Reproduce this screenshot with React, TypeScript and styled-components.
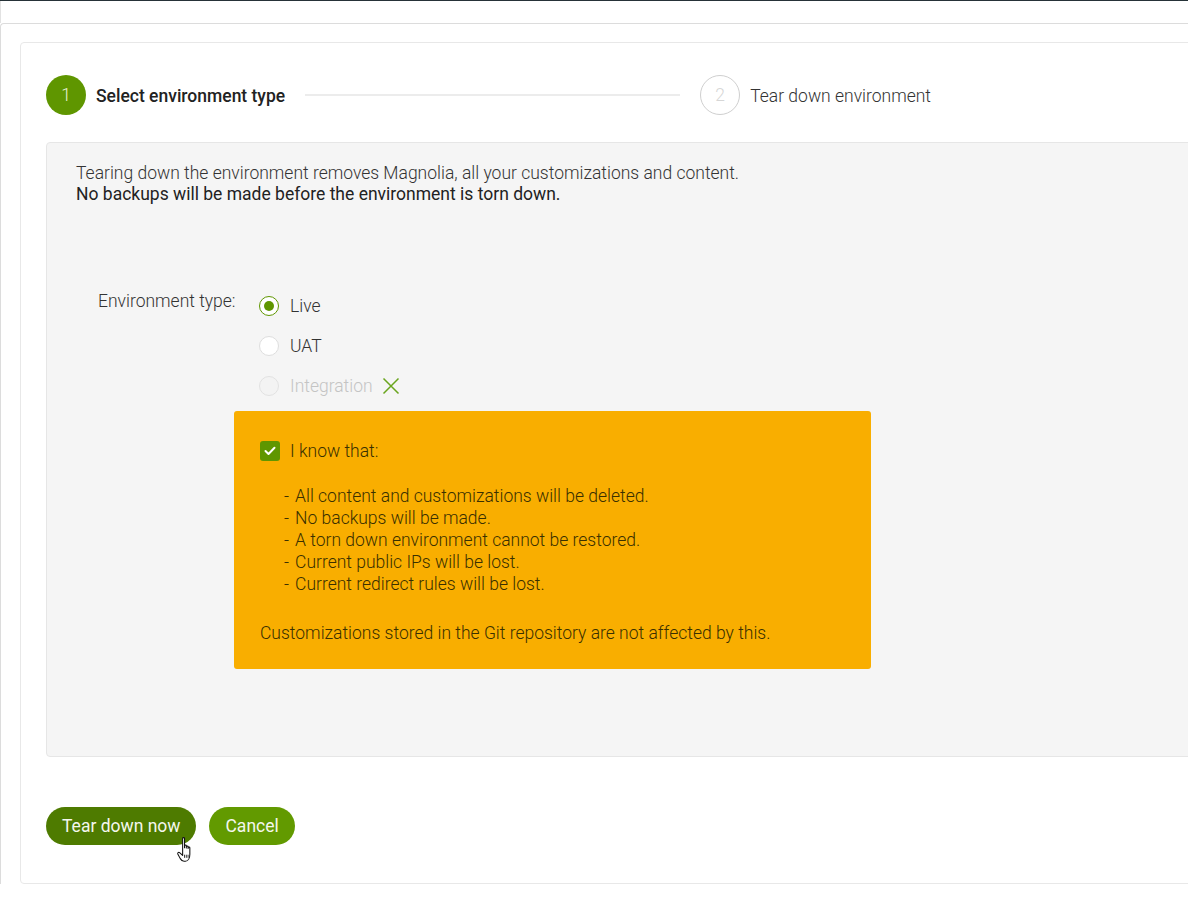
import React from 'react';
import styled, { createGlobalStyle } from 'styled-components';

const Global = createGlobalStyle`
  html, body { margin: 0; padding: 0; background: #fff; overflow: hidden; }
  body { font-family: Roboto, "Liberation Sans", Arial, sans-serif; color: #333; }
  * { box-sizing: border-box; }
`;

const Page = styled.div`
  border-top: 1px solid #263238;
  min-height: 900px;
`;

const TopStrip = styled.div`
  height: 22px;
  border-left: 1px solid #e2e2e2;
`;

const Outer = styled.div`
  border-top: 1px solid #dcdcdc;
  border-left: 1px solid #dcdcdc;
  border-top-left-radius: 4px;
  padding: 18px 0 0 19px;
  overflow: hidden;
`;

const Card = styled.div`
  width: 1250px;
  border: 1px solid #e8e8e8;
  border-radius: 4px;
  padding: 32px 25px 38px 25px;
`;

const Stepper = styled.div`
  display: flex;
  align-items: center;
  height: 40px;
`;

const Step = styled.div`
  display: flex;
  align-items: center;
  gap: 10px;
`;

const StepCircle = styled.div<{ $active?: boolean }>`
  width: 40px;
  height: 40px;
  border-radius: 50%;
  display: flex;
  align-items: center;
  justify-content: center;
  font-size: 17.5px;
  font-weight: 300;
  background: ${p => (p.$active ? '#5f9600' : '#fff')};
  color: ${p => (p.$active ? '#e6f0d6' : '#d6d6d6')};
  border: ${p => (p.$active ? 'none' : '1px solid #cfcfcf')};
`;

const StepLabel = styled.span<{ $active?: boolean }>`
  font-size: 17.5px;
  padding-top: 2px;
  font-weight: ${p => (p.$active ? 500 : 300)};
  color: ${p => (p.$active ? '#222' : '#333')};
`;

const Connector = styled.div`
  width: 375px;
  height: 2px;
  background: #ececec;
  margin: 0 20px;
`;

const Panel = styled.div`
  margin-top: 27px;
  background: #f5f5f5;
  border: 1px solid #e6e6e6;
  border-radius: 4px;
  padding: 20px 29px 87px 29px;
`;

const Intro = styled.p`
  margin: 0;
  font-size: 17.5px;
  line-height: 21px;
  font-weight: 300;
  color: #333;
`;

const Strong = styled.span`
  font-weight: 400;
  color: #222;
`;

const Form = styled.div`
  display: grid;
  grid-template-columns: 136px auto;
  margin: 81px 0 0 22px;
  align-items: start;
`;

const FieldLabel = styled.div`
  margin-top: 5px;
  font-size: 17.5px;
  line-height: 21px;
  font-weight: 300;
  color: #333;
  white-space: nowrap;
`;

const Field = styled.div`
  display: flex;
  flex-direction: column;
  align-items: flex-start;
`;

const RadioGroup = styled.div`
  padding-left: 25px;
`;

const RadioRow = styled.label<{ $disabled?: boolean }>`
  display: flex;
  align-items: center;
  height: 40px;
  gap: 11px;
  font-size: 17.5px;
  font-weight: 300;
  color: ${p => (p.$disabled ? '#c4c4c4' : '#333')};
`;

const RadioDot = styled.span<{ $checked?: boolean; $disabled?: boolean }>`
  width: 20px;
  height: 20px;
  border-radius: 50%;
  display: flex;
  align-items: center;
  justify-content: center;
  background: ${p => (p.$disabled ? '#f3f3f3' : '#fff')};
  border: 1.5px solid ${p => (p.$checked ? '#5f9600' : p.$disabled ? '#e2e2e2' : '#dedede')};
  &::after {
    content: '';
    display: ${p => (p.$checked ? 'block' : 'none')};
    width: 10px;
    height: 10px;
    border-radius: 50%;
    background: #5f9600;
  }
`;

const XMark = styled.svg`
  margin-left: -2px;
`;

const Warning = styled.div`
  margin-top: 5px;
  width: 637px;
  background: #f9ae00;
  border-radius: 3px;
  padding: 29px 26px 25px 26px;
  font-size: 17.5px;
  font-weight: 300;
  color: #3a3000;
`;

const CheckRow = styled.div`
  display: flex;
  align-items: center;
  gap: 10px;
  height: 22px;
`;

const CheckBox = styled.span`
  width: 20px;
  height: 20px;
  border-radius: 3px;
  background: #5f9600;
  display: flex;
  align-items: center;
  justify-content: center;
`;

const List = styled.ul`
  list-style: none;
  margin: 23px 0 0 24px;
  padding: 0;
  line-height: 22px;
`;

const Item = styled.li`
  display: flex;
  gap: 6px;
`;

const Note = styled.p`
  margin: 27px 0 0 0;
  line-height: 22px;
`;

const Actions = styled.div`
  position: relative;
  display: flex;
  gap: 13px;
  margin-top: 50px;
`;

const Button = styled.button<{ $dark?: boolean }>`
  height: 38px;
  border: none;
  border-radius: 19px;
  padding: 0 16px;
  font-family: Roboto, "Liberation Sans", Arial, sans-serif;
  font-size: 17.5px;
  font-weight: 400;
  color: #f4f7ee;
  background: ${p => (p.$dark ? '#4e7b00' : '#629a00')};
  cursor: pointer;
`;

const Cursor = styled.svg`
  position: absolute;
  left: 129px;
  top: 30px;
  pointer-events: none;
`;

const items = [
  'All content and customizations will be deleted.',
  'No backups will be made.',
  'A torn down environment cannot be restored.',
  'Current public IPs will be lost.',
  'Current redirect rules will be lost.',
];

export default function App() {
  return (
    <>
      <Global />
      <Page>
        <TopStrip />
        <Outer>
          <Card>
            <Stepper>
              <Step>
                <StepCircle $active>1</StepCircle>
                <StepLabel $active>Select environment type</StepLabel>
              </Step>
              <Connector />
              <Step>
                <StepCircle>2</StepCircle>
                <StepLabel>Tear down environment</StepLabel>
              </Step>
            </Stepper>
            <Panel>
              <Intro>
                Tearing down the environment removes Magnolia, all your customizations and content.
                <br />
                <Strong>No backups will be made before the environment is torn down.</Strong>
              </Intro>
              <Form>
                <FieldLabel>Environment type:</FieldLabel>
                <Field>
                  <RadioGroup>
                    <RadioRow>
                      <RadioDot $checked />
                      Live
                    </RadioRow>
                    <RadioRow>
                      <RadioDot />
                      UAT
                    </RadioRow>
                    <RadioRow $disabled>
                      <RadioDot $disabled />
                      Integration
                      <XMark width="18" height="18" viewBox="0 0 18 18">
                        <path d="M1.5 1.5 L16.5 16.5 M16.5 1.5 L1.5 16.5" stroke="#6aa51e" strokeWidth="1.5" fill="none" />
                      </XMark>
                    </RadioRow>
                  </RadioGroup>
                  <Warning>
                    <CheckRow>
                      <CheckBox>
                        <svg width="12" height="10" viewBox="0 0 12 10">
                          <path d="M1.5 5 L4.5 8 L10.5 1.8" stroke="#fff" strokeWidth="2" fill="none" strokeLinecap="round" strokeLinejoin="round" />
                        </svg>
                      </CheckBox>
                      I know that:
                    </CheckRow>
                    <List>
                      {items.map(t => (
                        <Item key={t}>
                          <span>-</span>
                          <span>{t}</span>
                        </Item>
                      ))}
                    </List>
                    <Note>Customizations stored in the Git repository are not affected by this.</Note>
                  </Warning>
                </Field>
              </Form>
            </Panel>
            <Actions>
              <Button $dark>Tear down now</Button>
              <Button>Cancel</Button>
              <Cursor width="20" height="26" viewBox="0 0 14 22">
                <path
                  d="M5 1.2 C5 0.3 6.6 0.3 6.6 1.2 L6.6 9 L6.6 7.4 C6.6 6.6 8.1 6.6 8.1 7.4 L8.1 9.3 L8.1 8.2 C8.1 7.4 9.6 7.4 9.6 8.2 L9.6 9.8 L9.6 9.1 C9.6 8.3 11.1 8.3 11.1 9.1 L11.1 14.5 C11.1 17.5 9.8 20.5 7.3 20.5 L6.2 20.5 C4.6 20.5 3.8 19.7 3 18.3 L0.9 14.3 C0.5 13.4 1.6 12.6 2.4 13.3 L5 15.6 Z"
                  fill="#fff"
                  stroke="#111"
                  strokeWidth="0.9"
                  strokeLinejoin="round"
                />
                <path d="M6.6 15 L6.6 17.6 M8.1 15 L8.1 17.6 M9.6 15 L9.6 17.6" stroke="#111" strokeWidth="0.7" />
              </Cursor>
            </Actions>
          </Card>
        </Outer>
      </Page>
    </>
  );
}
